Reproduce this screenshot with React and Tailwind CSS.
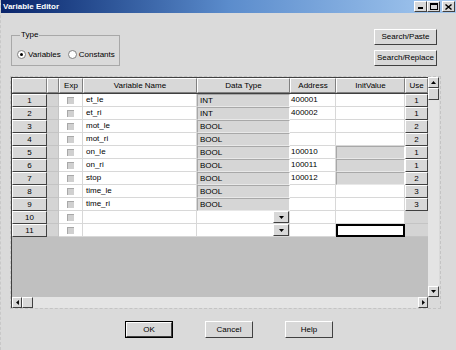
import React from "react";

const W = [35, 12, 24, 114, 93, 46, 69, 23];

const rows = [
  { n: 1, name: "et_le", type: "INT", addr: "400001", init: "w", use: "1" },
  { n: 2, name: "et_ri", type: "INT", addr: "400002", init: "w", use: "1" },
  { n: 3, name: "mot_le", type: "BOOL", addr: "", init: "w", use: "2" },
  { n: 4, name: "mot_ri", type: "BOOL", addr: "", init: "w", use: "2" },
  { n: 5, name: "on_le", type: "BOOL", addr: "100010", init: "g", use: "1" },
  { n: 6, name: "on_ri", type: "BOOL", addr: "100011", init: "g", use: "1" },
  { n: 7, name: "stop", type: "BOOL", addr: "100012", init: "g", use: "2" },
  { n: 8, name: "time_le", type: "BOOL", addr: "", init: "w", use: "3" },
  { n: 9, name: "time_ri", type: "BOOL", addr: "", init: "w", use: "3" },
  { n: 10, name: "", type: null, addr: "", init: "w", use: "" },
  { n: 11, name: "", type: null, addr: "", init: "f", use: "" },
];

const raised =
  "bg-[#d8d8d8] border-t border-l border-r border-b border-t-white border-l-white border-r-[#404040] border-b-[#404040]";
const raisedSoft =
  "bg-[#d8d8d8] border-t border-l border-r border-b border-t-white border-l-white border-r-[#808080] border-b-[#808080]";

function Arrow({ dir }) {
  const pts = {
    up: "0,4 3.5,0 7,4",
    down: "0,0 3.5,4 7,0",
    left: "4,0 0,3.5 4,7",
    right: "0,0 4,3.5 0,7",
  }[dir];
  const vb = dir === "up" || dir === "down" ? "0 0 7 4" : "0 0 4 7";
  const w = dir === "up" || dir === "down" ? 5 : 3;
  const h = dir === "up" || dir === "down" ? 3 : 5;
  return (
    <svg width={w} height={h} viewBox={vb}>
      <polygon points={pts} fill="#000" />
    </svg>
  );
}

function HeaderCell({ w, children }) {
  return (
    <div
      className={`${raisedSoft} h-full flex items-center justify-center text-[8px] leading-none shrink-0`}
      style={{ width: w }}
    >
      {children}
    </div>
  );
}

function Row({ r }) {
  return (
    <div className="flex h-[13px]">
      <div className={`${raised} shrink-0 flex items-center justify-center text-[8px] leading-none`} style={{ width: W[0] }}>
        {r.n}
      </div>
      <div className="shrink-0 bg-[#d4d4d4] border-r border-b border-[#c4c4c4]" style={{ width: W[1] }} />
      <div className="shrink-0 bg-white border-r border-b border-[#d8d8d8] flex items-center justify-center" style={{ width: W[2] }}>
        <div className="w-[7px] h-[7px] bg-[#d0d0d0] border-t border-l border-[#a8a8a8] border-r-white border-b-white" />
      </div>
      <div className="shrink-0 bg-white border-r border-b border-[#d8d8d8] flex items-center px-[3px] text-[8px] leading-none" style={{ width: W[3] }}>
        {r.name}
      </div>
      {r.type ? (
        <div className="shrink-0 bg-[#d6d6d6] border-t border-l border-[#a8a8a8] border-r border-b border-r-white border-b-[#e8e8e8] flex items-center px-[2px] text-[8px] leading-none" style={{ width: W[4] }}>
          {r.type}
        </div>
      ) : (
        <div className="shrink-0 bg-white border-r border-b border-[#d8d8d8] flex justify-end" style={{ width: W[4] }}>
          <div className={`${raised} w-[16px] h-full flex items-center justify-center`}>
            <Arrow dir="down" />
          </div>
        </div>
      )}
      <div className="shrink-0 bg-white border-r border-b border-[#d8d8d8] flex items-center px-[1px] text-[8px] leading-none" style={{ width: W[5] }}>
        {r.addr}
      </div>
      {r.init === "g" ? (
        <div className="shrink-0 bg-[#d6d6d6] border-t border-l border-[#a8a8a8] border-r border-b border-r-white border-b-[#e8e8e8]" style={{ width: W[6] }} />
      ) : r.init === "f" ? (
        <div className="shrink-0 bg-white border-2 border-black" style={{ width: W[6] }} />
      ) : (
        <div className="shrink-0 bg-white border-r border-b border-[#d8d8d8]" style={{ width: W[6] }} />
      )}
      {r.use ? (
        <div className={`${raised} shrink-0 flex items-center justify-center text-[8px] leading-none`} style={{ width: W[7] }}>
          {r.use}
        </div>
      ) : (
        <div className="shrink-0 bg-[#d4d4d4] border-b border-[#c4c4c4]" style={{ width: W[7] }} />
      )}
    </div>
  );
}

function Btn({ w, h, children, def }) {
  return (
    <div className={`${def ? "border border-black" : ""}`} style={{ width: w, height: h }}>
      <div className={`${raised} w-full h-full flex items-center justify-center text-[8px] leading-none`}>{children}</div>
    </div>
  );
}

export default function App() {
  return (
    <div className="w-[456px] h-[350px] bg-[#dadada] overflow-hidden flex flex-col text-black font-['Liberation_Sans',Arial,sans-serif] border-l border-dashed border-l-[#c8c8c8]">
      {/* Title bar */}
      <div className="h-[13px] shrink-0 bg-linear-to-r from-[#0a246a] via-[#5b8ccc] to-[#a6caf0] flex items-center justify-between pl-[2px] pr-[1px]">
        <span className="text-white font-bold text-[8px] leading-none">Variable Editor</span>
        <div className="flex items-center">
          <div className={`${raised} w-[13px] h-[11px] flex items-end justify-center pb-[2px]`}>
            <div className="w-[5px] h-[2px] bg-black" />
          </div>
          <div className={`${raised} w-[13px] h-[11px] flex items-center justify-center`}>
            <div className="w-[8px] h-[7px] border border-black border-t-2" />
          </div>
          <div className={`${raised} w-[13px] h-[11px] ml-[2px] flex items-center justify-center`}>
            <svg width="7" height="6" viewBox="0 0 7 6">
              <path d="M0.5 0.5 L6.5 5.5 M6.5 0.5 L0.5 5.5" stroke="#000" strokeWidth="1.4" />
            </svg>
          </div>
        </div>
      </div>

      {/* Top section */}
      <div className="mt-[16px] h-[37px] flex justify-between pl-[10px] pr-[19px] shrink-0">
        <div className="mt-[6px] w-[109px] h-[31px] border border-[#a8a8a8] relative">
          <span className="absolute -top-[5px] left-[8px] bg-[#dadada] px-[1px] text-[8px] leading-none">Type</span>
          <div className="flex items-center pt-[14px] pl-[5px] text-[8px] leading-none">
            <div className="w-[9px] h-[9px] rounded-full bg-white border border-[#808080] flex items-center justify-center">
              <div className="w-[3px] h-[3px] rounded-full bg-black" />
            </div>
            <span className="ml-[2px]">Variables</span>
            <div className="ml-[7px] w-[9px] h-[9px] rounded-full bg-white border border-[#808080]" />
            <span className="ml-[2px]">Constants</span>
          </div>
        </div>
        <div className="flex flex-col gap-[5px]">
          <Btn w={63} h={16}>Search/Paste</Btn>
          <Btn w={63} h={16}>Search/Replace</Btn>
        </div>
      </div>

      {/* Grid */}
      <div className="mt-[10px] ml-[9px] w-[431px] h-[233px] border border-dashed border-[#c4c4c4] flex shrink-0">
        <div className="w-[417px] flex flex-col">
          <div className="flex-1 bg-[#c0c0c0] border-l border-t border-[#404040] flex flex-col">
            <div className="flex h-[16px] border-b border-[#404040]">
              <HeaderCell w={W[0]} />
              <HeaderCell w={W[1]} />
              <HeaderCell w={W[2]}>Exp</HeaderCell>
              <HeaderCell w={W[3]}>Variable Name</HeaderCell>
              <HeaderCell w={W[4]}>Data Type</HeaderCell>
              <HeaderCell w={W[5]}>Address</HeaderCell>
              <HeaderCell w={W[6]}>InitValue</HeaderCell>
              <HeaderCell w={W[7]}>
                <span className="overflow-hidden whitespace-nowrap">Use</span>
              </HeaderCell>
            </div>
            {rows.map((r) => (
              <Row key={r.n} r={r} />
            ))}
          </div>
          <div className="h-[11px] flex bg-[#e4e4e4] border-l border-[#404040]">
            <div className={`${raised} w-[10px] h-full flex items-center justify-center`}>
              <Arrow dir="left" />
            </div>
            <div className={`${raised} w-[11px] h-full`} />
            <div className="flex-1" />
            <div className={`${raised} w-[10px] h-full flex items-center justify-center`}>
              <Arrow dir="right" />
            </div>
          </div>
        </div>
        <div className="w-[11px] flex flex-col">
          <div className="h-[220px] flex flex-col bg-[#e4e4e4]">
            <div className={`${raised} h-[11px] flex items-center justify-center`}>
              <Arrow dir="up" />
            </div>
            <div className={`${raised} h-[12px]`} />
            <div className="flex-1" />
            <div className={`${raised} h-[11px] flex items-center justify-center`}>
              <Arrow dir="down" />
            </div>
          </div>
        </div>
      </div>

      {/* Bottom buttons */}
      <div className="mt-[12px] flex pl-[124px] gap-[32px]">
        <Btn w={48} h={17} def>OK</Btn>
        <Btn w={48} h={17}>Cancel</Btn>
        <Btn w={48} h={17}>Help</Btn>
      </div>
    </div>
  );
}
